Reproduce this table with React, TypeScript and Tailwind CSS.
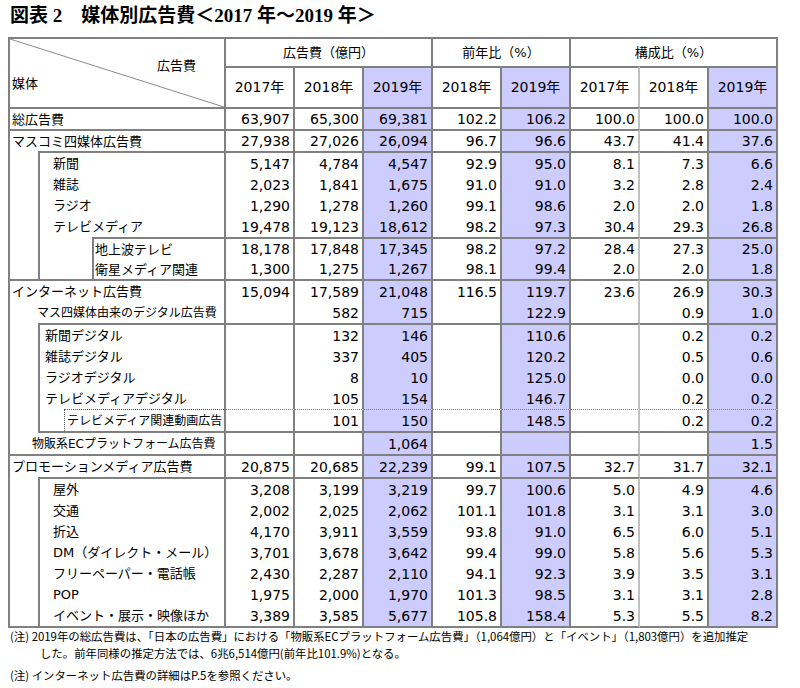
import React from "react";
import clsx from "clsx";

type Top = "solid" | "dot" | "none";

type Row = {
  label: React.ReactNode;
  h: string;
  full?: boolean; // top-level row: top line runs across the label column too
  top: Top;
  bottom?: boolean;
  v: string[];
};

const HL = [2, 4, 7];

// left box used for the sub-groups in the label column
const Box = ({
  first,
  closed,
  children,
}: {
  first?: boolean;
  closed?: boolean;
  children: React.ReactNode;
}) => (
  <>
    <div className="w-[28px] shrink-0" />
    <div
      className={clsx(
        "flex flex-1 items-center border-l-2 border-[#808080]",
        first && "border-t-2",
        closed && "border-b-2"
      )}
    >
      {children}
    </div>
  </>
);

const Inner = ({ first, children }: { first?: boolean; children: React.ReactNode }) => (
  <>
    <div className="w-[52px] shrink-0" />
    <div
      className={clsx(
        "flex flex-1 items-center self-stretch border-l-2 border-[#808080] pl-[1px]",
        first && "border-t-2"
      )}
    >
      {children}
    </div>
  </>
);

const Plain = ({ pl, children }: { pl: string; children: React.ReactNode }) => (
  <div className={clsx("flex flex-1 items-center whitespace-nowrap", pl)}>{children}</div>
);

const rows: Row[] = [
  {
    label: <Plain pl="pl-[2px]">総広告費</Plain>,
    h: "h-[22px]",
    full: true,
    top: "solid",
    v: ["63,907", "65,300", "69,381", "102.2", "106.2", "100.0", "100.0", "100.0"],
  },
  {
    label: <Plain pl="pl-[2px]">マスコミ四媒体広告費</Plain>,
    h: "h-[22px]",
    full: true,
    top: "solid",
    v: ["27,938", "27,026", "26,094", "96.7", "96.6", "43.7", "41.4", "37.6"],
  },
  {
    label: (
      <Box first>
        <span className="pl-[13px]">新聞</span>
      </Box>
    ),
    h: "h-[23px]",
    top: "solid",
    v: ["5,147", "4,784", "4,547", "92.9", "95.0", "8.1", "7.3", "6.6"],
  },
  {
    label: (
      <Box>
        <span className="pl-[13px]">雑誌</span>
      </Box>
    ),
    h: "h-[21px]",
    top: "none",
    v: ["2,023", "1,841", "1,675", "91.0", "91.0", "3.2", "2.8", "2.4"],
  },
  {
    label: (
      <Box>
        <span className="pl-[13px]">ラジオ</span>
      </Box>
    ),
    h: "h-[21px]",
    top: "none",
    v: ["1,290", "1,278", "1,260", "99.1", "98.6", "2.0", "2.0", "1.8"],
  },
  {
    label: (
      <Box>
        <span className="pl-[13px]">テレビメディア</span>
      </Box>
    ),
    h: "h-[21px]",
    top: "none",
    v: ["19,478", "19,123", "18,612", "98.2", "97.3", "30.4", "29.3", "26.8"],
  },
  {
    label: (
      <Box>
        <Inner first>地上波テレビ</Inner>
      </Box>
    ),
    h: "h-[22px]",
    top: "solid",
    v: ["18,178", "17,848", "17,345", "98.2", "97.2", "28.4", "27.3", "25.0"],
  },
  {
    label: (
      <Box>
        <Inner>衛星メディア関連</Inner>
      </Box>
    ),
    h: "h-[20px]",
    top: "none",
    v: ["1,300", "1,275", "1,267", "98.1", "99.4", "2.0", "2.0", "1.8"],
  },
  {
    label: <Plain pl="pl-[2px]">インターネット広告費</Plain>,
    h: "h-[23px]",
    full: true,
    top: "solid",
    v: ["15,094", "17,589", "21,048", "116.5", "119.7", "23.6", "26.9", "30.3"],
  },
  {
    label: (
      <Plain pl="pl-[27px] text-[12px]">マス四媒体由来のデジタル広告費</Plain>
    ),
    h: "h-[21px]",
    top: "none",
    v: ["", "582", "715", "", "122.9", "", "0.9", "1.0"],
  },
  {
    label: (
      <Box first>
        <span className="pl-[5px]">新聞デジタル</span>
      </Box>
    ),
    h: "h-[23px]",
    top: "solid",
    v: ["", "132", "146", "", "110.6", "", "0.2", "0.2"],
  },
  {
    label: (
      <Box>
        <span className="pl-[5px]">雑誌デジタル</span>
      </Box>
    ),
    h: "h-[21px]",
    top: "none",
    v: ["", "337", "405", "", "120.2", "", "0.5", "0.6"],
  },
  {
    label: (
      <Box>
        <span className="pl-[5px]">ラジオデジタル</span>
      </Box>
    ),
    h: "h-[21px]",
    top: "none",
    v: ["", "8", "10", "", "125.0", "", "0.0", "0.0"],
  },
  {
    label: (
      <Box>
        <span className="pl-[5px]">テレビメディアデジタル</span>
      </Box>
    ),
    h: "h-[21px]",
    top: "none",
    v: ["", "105", "154", "", "146.7", "", "0.2", "0.2"],
  },
  {
    label: (
      <Box closed>
        <div className="w-[24px] shrink-0" />
        <div className="flex flex-1 items-center self-stretch whitespace-nowrap border-l border-t border-dotted border-[#555] pl-[2px] text-[12px]">
          テレビメディア関連動画広告
        </div>
      </Box>
    ),
    h: "h-[24px]",
    top: "dot",
    bottom: true,
    v: ["", "101", "150", "", "148.5", "", "0.2", "0.2"],
  },
  {
    label: <Plain pl="pl-[22px] text-[12px]">物販系ECプラットフォーム広告費</Plain>,
    h: "h-[21px]",
    top: "none",
    v: ["", "", "1,064", "", "", "", "", "1.5"],
  },
  {
    label: <Plain pl="pl-[2px]">プロモーションメディア広告費</Plain>,
    h: "h-[23px]",
    full: true,
    top: "solid",
    v: ["20,875", "20,685", "22,239", "99.1", "107.5", "32.7", "31.7", "32.1"],
  },
  {
    label: (
      <Box first>
        <span className="pl-[13px]">屋外</span>
      </Box>
    ),
    h: "h-[23px]",
    top: "solid",
    v: ["3,208", "3,199", "3,219", "99.7", "100.6", "5.0", "4.9", "4.6"],
  },
  {
    label: (
      <Box>
        <span className="pl-[13px]">交通</span>
      </Box>
    ),
    h: "h-[21px]",
    top: "none",
    v: ["2,002", "2,025", "2,062", "101.1", "101.8", "3.1", "3.1", "3.0"],
  },
  {
    label: (
      <Box>
        <span className="pl-[13px]">折込</span>
      </Box>
    ),
    h: "h-[21px]",
    top: "none",
    v: ["4,170", "3,911", "3,559", "93.8", "91.0", "6.5", "6.0", "5.1"],
  },
  {
    label: (
      <Box>
        <span className="whitespace-nowrap pl-[13px]">DM（ダイレクト・メール）</span>
      </Box>
    ),
    h: "h-[21px]",
    top: "none",
    v: ["3,701", "3,678", "3,642", "99.4", "99.0", "5.8", "5.6", "5.3"],
  },
  {
    label: (
      <Box>
        <span className="whitespace-nowrap pl-[13px]">フリーペーパー・電話帳</span>
      </Box>
    ),
    h: "h-[21px]",
    top: "none",
    v: ["2,430", "2,287", "2,110", "94.1", "92.3", "3.9", "3.5", "3.1"],
  },
  {
    label: (
      <Box>
        <span className="pl-[13px]">POP</span>
      </Box>
    ),
    h: "h-[21px]",
    top: "none",
    v: ["1,975", "2,000", "1,970", "101.3", "98.5", "3.1", "3.1", "2.8"],
  },
  {
    label: (
      <Box>
        <span className="whitespace-nowrap pl-[13px]">イベント・展示・映像ほか</span>
      </Box>
    ),
    h: "h-[23px]",
    top: "none",
    bottom: true,
    v: ["3,389", "3,585", "5,677", "105.8", "158.4", "5.3", "5.5", "8.2"],
  },
];

const DataRow = ({ row, last }: { row: Row; last: boolean }) => (
  <div className={clsx("flex", row.h)}>
    <div
      className={clsx(
        "flex w-[218px] shrink-0 border-l-2 border-r-2 border-[#808080] text-[13px] leading-none",
        row.full && "border-t-2",
        last && "border-b-2"
      )}
    >
      {row.label}
    </div>
    {row.v.map((val, i) => (
      <div
        key={i}
        className={clsx(
          "flex w-[69px] shrink-0 items-center justify-end border-r-2 pr-[3px] text-[14px] leading-none",
          i === 5 ? "border-y-[#808080] border-r-[#c0c0c0]" : "border-[#808080]",
          HL.includes(i) && "bg-[#ccccff]",
          row.top === "solid" && "border-t-2",
          row.top === "dot" && "border-t [border-top-style:dotted]",
          row.bottom && "border-b-2"
        )}
      >
        {val}
      </div>
    ))}
  </div>
);

const years = ["2017年", "2018年", "2019年", "2018年", "2019年", "2017年", "2018年", "2019年"];

const App = () => {
  return (
    <div className="h-[688px] w-[800px] overflow-hidden bg-white font-['DejaVu_Sans','Noto_Sans_CJK_JP',sans-serif] text-black">
      {/* title */}
      <div className="h-[37px] pl-[10px] pt-[6px] font-['Liberation_Serif','Noto_Sans_CJK_JP',serif] text-[19px] font-bold leading-[20px]">
        図表 2　媒体別広告費＜2017 年～2019 年＞
      </div>

      <div className="ml-[8px] w-[770px]">
        {/* header */}
        <div className="flex">
          <div className="relative flex h-[70px] w-[218px] shrink-0 flex-col border-l-2 border-r-2 border-t-2 border-[#808080] text-[13px] leading-[18px]">
            <svg
              className="absolute inset-0 h-full w-full"
              viewBox="0 0 100 100"
              preserveAspectRatio="none"
            >
              <line
                x1="0"
                y1="0"
                x2="100"
                y2="100"
                stroke="#8a8a8a"
                strokeWidth="1"
                vectorEffect="non-scaling-stroke"
              />
            </svg>
            <div className="mt-[18px] self-end pr-[28px]">広告費</div>
            <div className="pl-[2px]">媒体</div>
          </div>
          <div className="flex flex-col">
            <div className="flex h-[29px] text-[13px]">
              <div className="flex w-[207px] items-center justify-center border-r-2 border-t-2 border-[#808080]">
                広告費（億円）
              </div>
              <div className="flex w-[138px] items-center justify-center border-r-2 border-t-2 border-[#808080]">
                前年比（%）
              </div>
              <div className="flex w-[207px] items-center justify-center border-r-2 border-t-2 border-[#808080]">
                構成比（%）
              </div>
            </div>
            <div className="flex h-[41px] text-[14px]">
              {years.map((y, i) => (
                <div
                  key={i}
                  className={clsx(
                    "flex w-[69px] items-center justify-center border-r-2 border-t-2",
                    i === 5 ? "border-t-[#808080] border-r-[#c0c0c0]" : "border-[#808080]",
                    HL.includes(i) && "bg-[#ccccff]"
                  )}
                >
                  {y}
                </div>
              ))}
            </div>
          </div>
        </div>

        {rows.map((row, i) => (
          <DataRow key={i} row={row} last={i === rows.length - 1} />
        ))}
      </div>

      {/* notes */}
      <div className="pl-[10px] font-['Noto_Sans_CJK_JP',sans-serif] text-[11.4px] leading-[17px] whitespace-nowrap">
        <p>
          (注) 2019年の総広告費は、「日本の広告費」における「物販系ECプラットフォーム広告費」（1,064億円）と「イベント」（1,803億円）を追加推定
        </p>
        <p className="pl-[30px]">
          した。前年同様の推定方法では、6兆6,514億円(前年比101.9%)となる。
        </p>
        <p className="mt-[5px]">(注) インターネット広告費の詳細はP.5を参照ください。</p>
      </div>
    </div>
  );
};

export default App;
